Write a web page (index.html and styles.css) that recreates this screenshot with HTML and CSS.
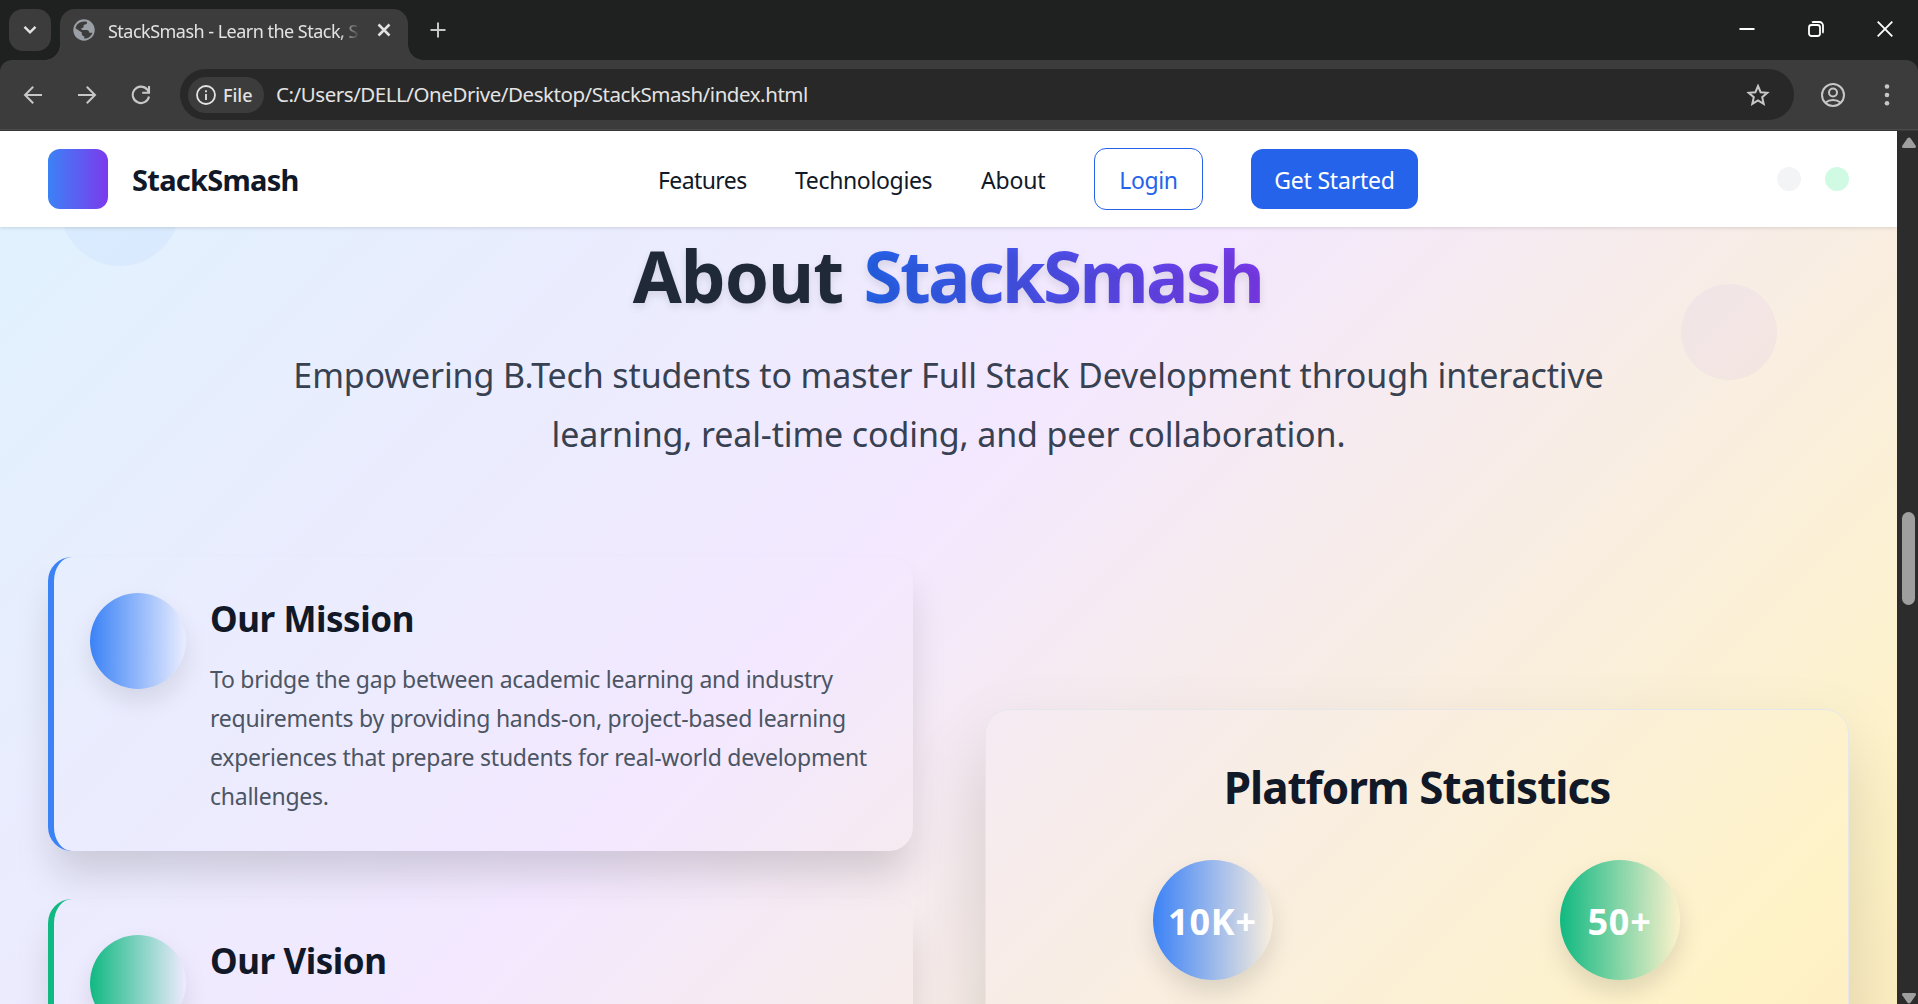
FILE: index.html
```html
<!DOCTYPE html>
<html lang="en">
<head>
<meta charset="utf-8">
<title>StackSmash - Learn the Stack, Smash the Code</title>
<link rel="stylesheet" href="styles.css">
</head>
<body>
<div class="window">
  <div class="tabstrip">
    <button class="tab-search" aria-label="Search tabs"><svg width="14" height="10" viewBox="0 0 14 10" fill="none" stroke="#e3e3e3" stroke-width="2.4"><path d="M1.5 1.8 7 7.3l5.500-5.500"/></svg></button>
    <div class="tab">
      <svg class="globe" width="22" height="22" viewBox="0 0 22 22"><circle cx="11" cy="11" r="10.700" fill="#9aa0a6"/><path fill="#3c3c3c" d="M12.300 2.400c1.300.1 1.800.5 1.800 1.100 0 1.300-.8 1.900-2.100 2.100-1.100.1-1.400.7-1.400 1.800 0 1-.8 1.500-2 1.500-.6.8-.1 1.900 1 2h4.100c1.700.1 2.500 1.200 2.600 2.800h3.100c-.9 3.300-4.200 5.900-8.200 5.900v-2.300c-1.500-.2-2.400-1.100-2.400-2.500v-1.200L2.500 9.200C3.200 5.300 6.600 2.100 12.300 2.400z"/></svg>
      <span class="tab-title">StackSmash - Learn the Stack, S</span>
      <svg class="tab-close" width="14" height="14" viewBox="0 0 14 14" stroke="#e3e3e3" stroke-width="2.500"><path d="m1.500 1.500 11 11m0-11-11 11"/></svg>
    </div>
    <svg class="new-tab" width="16" height="16" viewBox="0 0 16 16" stroke="#c7c7c7" stroke-width="2"><path d="M8 .5v15M.5 8h15"/></svg>
    <div class="win-controls">
      <svg width="16" height="16" viewBox="0 0 16 16" stroke="#fff" stroke-width="2"><path d="M.5 8h15"/></svg>
      <svg width="16" height="16" viewBox="0 0 16 16" fill="none" stroke="#fff" stroke-width="1.800"><rect x="1" y="4" width="11" height="11" rx="2.500"/><path d="M4 1.500C4.500 1 5 1 6 1h5.500A3.500 3.500 0 0 1 15 4.500V10c0 1 0 1.500-.5 2"/></svg>
      <svg width="16" height="16" viewBox="0 0 16 16" stroke="#fff" stroke-width="1.800"><path d="m.7.7 14.600 14.600m0-14.600L.7 15.300"/></svg>
    </div>
  </div>
  <div class="toolbar">
    <svg width="20" height="20" viewBox="0 0 20 20" fill="none" stroke="#c7c7c7" stroke-width="2"><path d="M19 10H2.200M10.200 1.700 2 10l8.200 8.300"/></svg>
    <svg width="20" height="20" viewBox="0 0 20 20" fill="none" stroke="#c7c7c7" stroke-width="2"><path d="M1 10h16.800M9.800 1.700 18 10l-8.200 8.300"/></svg>
    <svg width="20" height="20" viewBox="0 0 20 20" fill="none" stroke="#c7c7c7" stroke-width="2.100"><path d="M18 11.500A8.200 8.200 0 1 1 16.200 4.500L18 7.300M18 1v6.800h-6.800"/></svg>
    <div class="omnibox">
      <div class="chip"><svg width="20" height="20" viewBox="0 0 20 20" fill="none" stroke="#e3e3e3" stroke-width="1.800"><circle cx="10" cy="10" r="9"/><path d="M10 9v6M10 5.200v2"/></svg><span class="chip-label">File</span></div>
      <span class="url">C:/Users/DELL/OneDrive/Desktop/StackSmash/index.html</span>
      <svg class="star" width="24" height="24" viewBox="0 0 24 24" fill="none" stroke="#c7c7c7" stroke-width="2"><path d="m12 3 2.600 6.200 6.700.6-5.100 4.400 1.500 6.600-5.700-3.500-5.700 3.500 1.500-6.600-5.100-4.400 6.700-.6z"/></svg>
    </div>
    <svg class="profile" width="24" height="24" viewBox="0 0 24 24" fill="none" stroke="#c7c7c7" stroke-width="2"><circle cx="12" cy="12" r="11"/><circle cx="12" cy="9.500" r="4"/><path d="M4.500 19.500c4.200-3.300 10.800-3.300 15 0"/></svg>
    <svg width="6" height="24" viewBox="0 0 6 24" fill="#c7c7c7"><circle cx="3" cy="3.500" r="2.300"/><circle cx="3" cy="12" r="2.300"/><circle cx="3" cy="20.300" r="2.300"/></svg>
  </div>
  <div class="viewport">
    <div class="page">
      <header class="header">
        <div class="brand"><span class="logo"></span><span class="brand-name">StackSmash</span></div>
        <nav class="nav">
          <a class="link-features">Features</a>
          <a class="link-tech">Technologies</a>
          <a class="link-about">About</a>
          <a class="login">Login</a>
          <a class="start">Get Started</a>
        </nav>
        <div class="dots"><i></i><i class="on"></i></div>
      </header>
      <section class="about">
        <span class="bubble bubble-left"></span>
        <span class="bubble bubble-right"></span>
        <h1><span class="h1-about">About</span> <span class="h1-brand">StackSmash</span></h1>
        <p class="lead">Empowering B.Tech students to master Full Stack Development through interactive<br>learning, real-time coding, and peer collaboration.</p>
        <div class="columns">
          <div class="cards">
            <article class="card blue">
              <span class="orb"></span>
              <div>
                <h2>Our Mission</h2>
                <p>To bridge the gap between academic learning and industry<br>requirements by providing hands-on, project-based learning<br>experiences that prepare students for real-world development<br>challenges.</p>
              </div>
            </article>
            <article class="card green">
              <span class="orb"></span>
              <div>
                <h2>Our Vision</h2>
              </div>
            </article>
          </div>
          <div class="stats">
            <h2>Platform Statistics</h2>
            <div class="stat-grid">
              <span class="stat blue">10K+</span>
              <span class="stat green">50+</span>
            </div>
          </div>
        </div>
      </section>
    </div>
    <div class="scrollbar">
      <svg width="16" height="12" viewBox="0 0 16 12"><path fill="#9f9f9f" d="M6.300 1.500Q8-.6 9.700 1.500l5 7.300q1 2.200-1.500 2.200H2.800Q.3 11 1.300 8.800z"/></svg>
      <span class="thumb"></span>
      <svg width="16" height="12" viewBox="0 0 16 12"><path fill="#9f9f9f" d="M6.300 10.500Q8 12.600 9.700 10.500l5-7.300q1-2.200-1.500-2.200H2.800Q.3 1 1.300 3.200z"/></svg>
    </div>
  </div>
</div>
</body>
</html>
```
FILE: styles.css
```css
* { box-sizing: border-box; }
body { margin: 0; font-family: "Noto Sans", "Open Sans", sans-serif; color: #111827; }
h1, h2, p { margin: 0; }
svg { display: block; flex: none; }
.window { width: 1918px; height: 1004px; display: flex; flex-direction: column; overflow: hidden; background: #1f2120; }

/* browser tab strip */
.tabstrip { height: 60px; flex: none; display: flex; align-items: flex-start; padding-left: 9px; }
.tab-search { width: 42px; height: 42px; margin-top: 9px; padding: 0; border: 0; border-radius: 14px; background: #3c3c3c; display: flex; align-items: center; justify-content: center; }
.tab { position: relative; width: 348px; height: 51px; margin: 9px 0 0 9px; padding: 0 17px 9px 13px; border-radius: 15px 15px 0 0; background: #3c3c3c; display: flex; align-items: center; }
.tab::before, .tab::after { content: ""; position: absolute; bottom: 0; width: 15px; height: 15px; }
.tab::before { left: -15px; background: radial-gradient(circle at 0 0, transparent 14.5px, #3c3c3c 15px); }
.tab::after { right: -15px; background: radial-gradient(circle at 100% 0, transparent 14.5px, #3c3c3c 15px); }
.tab-title { width: 252px; margin-left: 13px; white-space: nowrap; font-size: 18px; line-height: 26px; letter-spacing: -0.52px; color: #e3e3e3; padding-top: 2px; -webkit-mask-image: linear-gradient(90deg, #000 92%, transparent); mask-image: linear-gradient(90deg, #000 92%, transparent); }
.tab-close { margin-left: auto; }
.new-tab { margin: 22px 0 0 22px; }
.win-controls { margin: 21px 25px 0 auto; display: flex; gap: 53px; }

/* browser toolbar */
.toolbar { height: 71px; flex: none; display: flex; align-items: center; padding: 0 28px 1px 23px; gap: 34px; background: #3c3c3c; border-radius: 12px 12px 0 0; border-bottom: 1px solid #393939; box-shadow: inset 0 -1px #4a4a4a; }
.omnibox { flex: 1; height: 51px; margin-left: -5px; margin-right: -7px; padding: 0 24px 0 8px; border-radius: 26px; background: #282828; display: flex; align-items: center; }
.chip { width: 76px; height: 36px; border-radius: 18px; background: #3c3c3c; display: flex; align-items: center; padding-left: 8px; }
.chip-label { margin-left: 7px; font-size: 18px; font-weight: 500; color: #e3e3e3; }
.url { margin-left: 12px; padding-bottom: 2px; font-size: 20.5px; letter-spacing: -0.45px; color: #e3e3e3; white-space: nowrap; }
.star { margin-left: auto; }
.profile { margin-right: 5px; }

/* page area */
.viewport { flex: 1; min-height: 0; display: flex; }
.page { width: 1897px; overflow: hidden; display: flex; flex-direction: column; }
.scrollbar { width: 21px; background: #2c2c2c; display: flex; flex-direction: column; align-items: center; padding: 6px 0 0 2px; }
.thumb { width: 13px; height: 93px; margin: 363px 0 387px; border-radius: 7px; background: #9f9f9f; flex: none; }

.header { position: relative; z-index: 2; height: 96px; flex: none; padding: 0 48px; display: flex; align-items: center; background: #fff; box-shadow: 0 1px 4px rgba(0,0,0,.13); }
.brand { display: flex; align-items: center; gap: 24px; width: 610px; }
.logo { width: 60px; height: 60px; border-radius: 12px; background: linear-gradient(90deg, #3b82f6, #7c3aed); }
.brand-name { font-size: 29px; font-weight: 700; letter-spacing: -0.72px; }
.nav { display: flex; align-items: center; gap: 48px; font-size: 23px; line-height: 32px; letter-spacing: -0.4px; white-space: nowrap; }
.link-features { width: 89px; letter-spacing: -0.6px; padding-top: 2px; }
.link-tech { width: 138px; letter-spacing: -0.35px; padding-top: 2px; }
.link-about { width: 65px; letter-spacing: -0.15px; padding-top: 2px; }
.login { width: 109px; height: 62px; padding-top: 2px; border: 1.5px solid #2563eb; border-radius: 12px; color: #2563eb; display: flex; align-items: center; justify-content: center; }
.start { width: 167px; height: 60px; padding-top: 2px; letter-spacing: -0.2px; border-radius: 12px; background: #2563eb; color: #fff; display: flex; align-items: center; justify-content: center; }
.dots { margin-left: auto; display: flex; gap: 24px; }
.dots i { width: 24px; height: 24px; border-radius: 50%; background: #f3f4f6; }
.dots .on { background: #d1fae5; }

.about { position: relative; flex: none; height: 1200px; margin-top: -57px; padding: 57px 48px 0; background: linear-gradient(135deg, #e0f2fe 0, #f3e8ff 894px, #fef3c7 1789px, #fed7aa 2683px); }
.bubble { position: absolute; border-radius: 50%; }
.bubble-left { left: 60px; top: -24px; width: 120px; height: 120px; background: rgba(59,130,246,.05); }
.bubble-right { left: 1681px; top: 114px; width: 96px; height: 96px; background: rgba(139,92,246,.05); }
h1 { height: 98px; padding-top: 1px; text-align: center; font-size: 71px; line-height: 96px; font-weight: 700; color: #1f2937; letter-spacing: -1px; white-space: nowrap; text-shadow: 0 4px 8px rgba(0,0,0,.1); }
.h1-brand { margin-left: 3px; letter-spacing: -2.7px; padding-right: 2px; background: linear-gradient(90deg, #2563eb, #7c3aed); -webkit-background-clip: text; background-clip: text; color: transparent; }
.lead { margin-top: 21px; height: 121px; text-align: center; font-size: 34px; line-height: 59px; letter-spacing: -0.13px; color: #374151; white-space: nowrap; }
.columns { display: flex; align-items: flex-start; gap: 72px; margin-top: 90px; }
.cards { width: 865px; display: flex; flex-direction: column; gap: 48px; }
.card { height: 294px; padding: 36px 36px 0; border-left: 6px solid; border-radius: 24px; display: flex; gap: 24px; box-shadow: 0 27px 38px -5px rgba(0,0,0,.15); }
.card h2 { font-size: 35px; line-height: 52px; letter-spacing: -0.45px; white-space: nowrap; }
.card p { margin-top: 15px; font-size: 23px; line-height: 39px; letter-spacing: -0.25px; color: #4b5563; white-space: nowrap; }
.card.blue { border-color: #3b82f6; }
.card.green { border-color: #10b981; }
.orb { width: 96px; height: 96px; flex: none; border-radius: 50%; box-shadow: 0 12px 24px rgba(0,0,0,.1); }
.blue .orb, .stat.blue { background: linear-gradient(90deg, #3b82f6, transparent); }
.green .orb, .stat.green { background: linear-gradient(90deg, #10b981, transparent); }
.stats { width: 864px; height: 700px; margin-top: 152px; padding-top: 47px; border: 1.5px solid #e5e7eb; border-radius: 24px; box-shadow: 0 37px 75px rgba(0,0,0,.15); }
.stats h2 { text-align: center; font-size: 44px; line-height: 60px; letter-spacing: -1px; }
.stat-grid { display: grid; grid-template-columns: 407px 407px; justify-content: center; justify-items: center; margin-top: 43px; padding-right: 2px; }
.stat { width: 120px; height: 120px; padding-top: 2px; border-radius: 50%; display: flex; align-items: center; justify-content: center; color: #fff; font-size: 36px; letter-spacing: 0.8px; font-weight: 700; box-shadow: 0 12px 24px rgba(0,0,0,.12); }
```
